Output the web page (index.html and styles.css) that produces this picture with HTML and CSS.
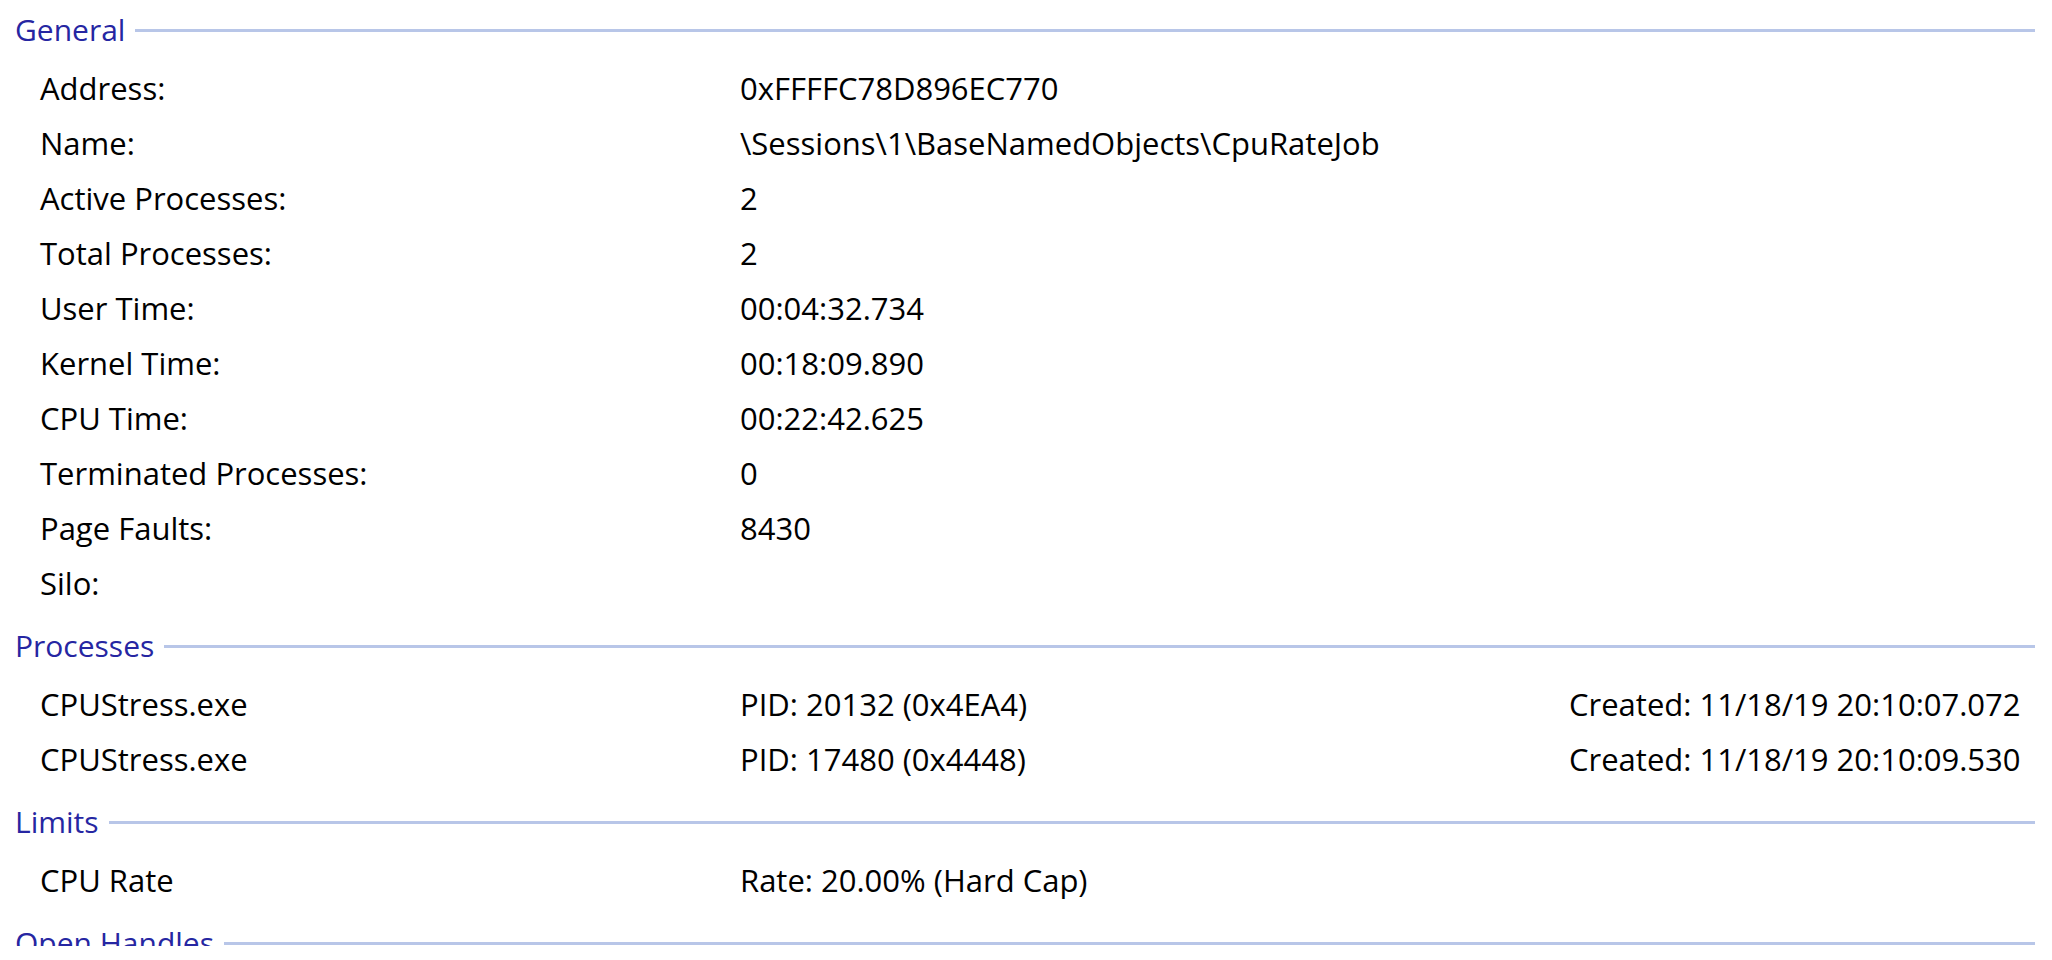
FILE: index.html
```html
<!DOCTYPE html>
<html lang="en">
<head>
  <meta charset="UTF-8">
  <title>Job Properties</title>
  <link rel="stylesheet" href="styles.css">
</head>
<body>
  <div class="panel">

    <div class="group-head"><span>General</span><div class="rule"></div></div>
    <div class="row"><span>Address:</span><span>0xFFFFC78D896EC770</span></div>
    <div class="row"><span>Name:</span><span>\Sessions\1\BaseNamedObjects\CpuRateJob</span></div>
    <div class="row"><span>Active Processes:</span><span>2</span></div>
    <div class="row"><span>Total Processes:</span><span>2</span></div>
    <div class="row"><span>User Time:</span><span>00:04:32.734</span></div>
    <div class="row"><span>Kernel Time:</span><span>00:18:09.890</span></div>
    <div class="row"><span>CPU Time:</span><span>00:22:42.625</span></div>
    <div class="row"><span>Terminated Processes:</span><span>0</span></div>
    <div class="row"><span>Page Faults:</span><span>8430</span></div>
    <div class="row"><span>Silo:</span><span></span></div>

    <div class="group-head"><span>Processes</span><div class="rule"></div></div>
    <div class="row"><span>CPUStress.exe</span><span>PID: 20132 (0x4EA4)</span><span>Created: 11/18/19 20:10:07.072</span></div>
    <div class="row"><span>CPUStress.exe</span><span>PID: 17480 (0x4448)</span><span>Created: 11/18/19 20:10:09.530</span></div>

    <div class="group-head"><span>Limits</span><div class="rule"></div></div>
    <div class="row"><span>CPU Rate</span><span>Rate: 20.00% (Hard Cap)</span></div>

    <div class="group-head"><span>Open Handles</span><div class="rule"></div></div>

  </div>
</body>
</html>
```

FILE: styles.css
```css
body {
  margin: 0;
  background: #fff;
  font-family: "Open Sans", "Noto Sans", sans-serif;
  font-size: 31px;
  color: #000;
}
.panel {
  height: 946px;
  overflow: hidden;
  padding: 0 17px 0 15px;
}

/* section title with a rule running to the right edge */
.group-head {
  display: flex;
  align-items: center;
  height: 66px;
  box-sizing: border-box;
  padding: 8px 0 14px;
  font-size: 30px;
  line-height: 44px;
  color: #2626a2;
}
.rule {
  flex: 1;
  height: 3px;
  margin-left: 10px;
  background: #b8c6e8;
}

/* label / value / extra columns */
.row {
  display: grid;
  grid-template-columns: 700px 829px 1fr;
  height: 55px;
  padding-left: 25px;
  line-height: 44px;
  white-space: nowrap;
}
```
